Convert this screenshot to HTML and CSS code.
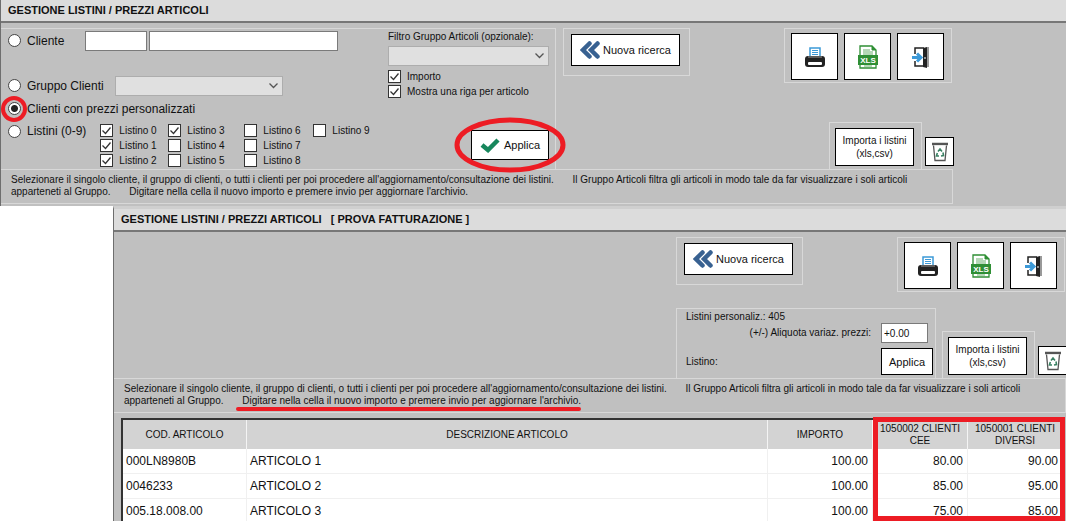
FILE: index.html
```
<!DOCTYPE html>
<html lang="it">
<head>
    <meta charset="UTF-8">
    <meta name="viewport" content="width=device-width, initial-scale=1.0">
    <title>Gestione listini / prezzi articoli</title>
    <link rel="stylesheet" href="styles.css">
</head>
<body>
    <!-- shared icons -->
    <svg class="sprite" aria-hidden="true">
        <symbol id="icon-back" viewBox="0 0 20 18">
            <path d="M9.500 2.500 3 9l6.500 6.500M17.500 2.500 11 9l6.500 6.500" fill="none" stroke="#386191" stroke-width="4.500" stroke-linecap="round"/>
        </symbol>
        <symbol id="icon-check" viewBox="0 0 20 16">
            <path d="M2 8 8 13 18 3" fill="none" stroke="#17875c" stroke-width="4.500"/>
        </symbol>
        <symbol id="icon-print" viewBox="0 0 22 22">
            <path d="M6 12V2h10v10" fill="#fff" stroke="#3d9ad8" stroke-width="1.500"/>
            <path d="M8 4.500h6M8 6.500h6M8 8.500h6" stroke="#3d9ad8"/>
            <rect x="1" y="10" width="20" height="11" rx="3" fill="#222"/>
            <path d="M4 11h14" stroke="#999"/>
            <rect x="4" y="16" width="14" height="3" rx="1" fill="#fff"/>
        </symbol>
        <symbol id="icon-xls" viewBox="0 0 22 24">
            <path d="M3 10V1h12l4 4v5M3 19v4h16v-4" fill="#fff" stroke="#2f8f35" stroke-width="1.300"/>
            <path d="M15 1v4h4" fill="#2f8f35" stroke="#2f8f35"/>
            <path d="M6 5h7M6 7h10M6 9h10M7 21h8" stroke="#6bb06f"/>
            <rect x="1" y="10" width="20" height="10" fill="#2f8f35"/>
        </symbol>
        <symbol id="icon-exit" viewBox="0 0 20 22">
            <path d="M4 8V2h9M4 15v5h9" fill="none" stroke="#222" stroke-width="1.500"/>
            <path d="M12 2l4-1v21l-4-1z" fill="#222"/>
            <path d="M17 1v20" stroke="#777" stroke-width="1.500"/>
            <path d="M13 12h2" stroke="#fff"/>
            <path d="M1 11.500h7M6 7.500l4 4-4 4" fill="none" stroke="#3d9ad8" stroke-width="3"/>
        </symbol>
        <symbol id="icon-trash" viewBox="0 0 18 20">
            <path d="M1 2h16" stroke="#555" stroke-width="2.500"/>
            <path d="M2.500 3.500 4 18.500h10l1.500-15" fill="#fff" stroke="#555" stroke-width="1.300"/>
            <path d="M7 9.500 9 7l2 2.500M12 10.500l.5 3-2.500.5M8 14H5.500l.8-3" fill="none" stroke="#3b8264" stroke-width="1.600"/>
        </symbol>
    </svg>

    <section class="window">
        <h1 class="title-bar">GESTIONE LISTINI / PREZZI ARTICOLI</h1>
        <div class="window-body">
            <div class="filters">
                <div class="filters-left">
                    <div class="row">
                        <label class="choice"><input type="radio" name="tipo"> Cliente</label>
                        <input type="text" class="field code" aria-label="Codice cliente">
                        <input type="text" class="field name" aria-label="Nome cliente">
                    </div>
                    <div class="row row-group">
                        <label class="choice"><input type="radio" name="tipo"> Gruppo Clienti</label>
                        <select class="select" aria-label="Gruppo clienti"><option></option></select>
                    </div>
                    <div class="row">
                        <label class="choice"><input type="radio" name="tipo" checked> Clienti con prezzi personalizzati
                            <svg class="mark-radio" viewBox="0 0 28 28"><circle cx="14" cy="14" r="11"/></svg>
                        </label>
                    </div>
                    <div class="row row-lists">
                        <label class="choice"><input type="radio" name="tipo"> Listini (0-9)</label>
                        <div class="lists">
                            <label class="tick"><input type="checkbox" checked> Listino 0</label>
                            <label class="tick"><input type="checkbox" checked> Listino 1</label>
                            <label class="tick"><input type="checkbox" checked> Listino 2</label>
                            <label class="tick"><input type="checkbox" checked> Listino 3</label>
                            <label class="tick"><input type="checkbox"> Listino 4</label>
                            <label class="tick"><input type="checkbox"> Listino 5</label>
                            <label class="tick"><input type="checkbox"> Listino 6</label>
                            <label class="tick"><input type="checkbox"> Listino 7</label>
                            <label class="tick"><input type="checkbox"> Listino 8</label>
                            <label class="tick"><input type="checkbox"> Listino 9</label>
                        </div>
                    </div>
                </div>
                <div class="filters-right">
                    <label for="filtro">Filtro Gruppo Articoli (opzionale):</label>
                    <select id="filtro" class="select"><option></option></select>
                    <label class="tick"><input type="checkbox" checked> Importo</label>
                    <label class="tick"><input type="checkbox" checked> Mostra una riga per articolo</label>
                    <div class="apply">
                        <button class="btn btn-apply"><svg width="20" height="16"><use href="#icon-check"/></svg>Applica</button>
                        <svg class="mark-apply" viewBox="0 0 112 56"><ellipse cx="56" cy="28" rx="53" ry="25"/></svg>
                    </div>
                </div>
            </div>
            <div class="tools">
                <div class="tools-top">
                    <div class="box search-box">
                        <button class="btn btn-search"><svg width="20" height="18"><use href="#icon-back"/></svg>Nuova ricerca</button>
                    </div>
                    <div class="box icon-box">
                        <button class="btn btn-icon" aria-label="Stampa"><svg width="22" height="22"><use href="#icon-print"/></svg></button>
                        <button class="btn btn-icon" aria-label="Esporta XLS"><svg width="22" height="24"><use href="#icon-xls"/><text x="11" y="18" class="xls-label">XLS</text></svg></button>
                        <button class="btn btn-icon" aria-label="Esci"><svg width="20" height="22"><use href="#icon-exit"/></svg></button>
                    </div>
                </div>
                <div class="tools-bottom">
                    <div class="box import-box"><button class="btn btn-import">Importa i listini<br>(xls,csv)</button></div>
                    <button class="btn btn-trash" aria-label="Elimina"><svg width="18" height="20"><use href="#icon-trash"/></svg></button>
                </div>
            </div>
        </div>
        <p class="note">Selezionare il singolo cliente, il gruppo di clienti, o tutti i clienti per poi procedere all'aggiornamento/consultazione dei listini. <span class="indent">Il Gruppo Articoli filtra gli articoli in modo tale da far visualizzare i soli articoli</span><br>apparteneti al Gruppo. <span class="indent">Digitare nella cella il nuovo importo e premere invio per aggiornare l'archivio.</span></p>
    </section>

    <section class="window window-result">
        <h2 class="title-bar">GESTIONE LISTINI / PREZZI ARTICOLI <span class="company">[ PROVA FATTURAZIONE ]</span></h2>
        <div class="window-body">
            <div class="empty"></div>
            <div class="tools">
                <div class="tools-top">
                    <div class="box search-box">
                        <button class="btn btn-search"><svg width="20" height="18"><use href="#icon-back"/></svg>Nuova ricerca</button>
                    </div>
                    <div class="box icon-box">
                        <button class="btn btn-icon" aria-label="Stampa"><svg width="22" height="22"><use href="#icon-print"/></svg></button>
                        <button class="btn btn-icon" aria-label="Esporta XLS"><svg width="22" height="24"><use href="#icon-xls"/><text x="11" y="18" class="xls-label">XLS</text></svg></button>
                        <button class="btn btn-icon" aria-label="Esci"><svg width="20" height="22"><use href="#icon-exit"/></svg></button>
                    </div>
                </div>
                <div class="tools-bottom">
                    <div class="box price-box">
                        <div>Listini personaliz.: 405</div>
                        <div class="price-row">
                            <label for="aliquota">(+/-) Aliquota variaz. prezzi:</label>
                            <input type="text" id="aliquota" class="field rate" value="+0.00">
                        </div>
                        <div class="price-row price-list">
                            <span>Listino:</span>
                            <button class="btn btn-small">Applica</button>
                        </div>
                    </div>
                    <div class="box import-box"><button class="btn btn-import">Importa i listini<br>(xls,csv)</button></div>
                    <button class="btn btn-trash" aria-label="Elimina"><svg width="18" height="20"><use href="#icon-trash"/></svg></button>
                </div>
            </div>
        </div>
        <p class="note">Selezionare il singolo cliente, il gruppo di clienti, o tutti i clienti per poi procedere all'aggiornamento/consultazione dei listini. <span class="indent">Il Gruppo Articoli filtra gli articoli in modo tale da far visualizzare i soli articoli</span><br>apparteneti al Gruppo. <span class="indent underlined">Digitare nella cella il nuovo importo e premere invio per aggiornare l'archivio.</span></p>
        <div class="table-wrap">
            <table class="prices">
                <colgroup>
                    <col class="col-code"><col><col class="col-price"><col class="col-client"><col class="col-client">
                </colgroup>
                <thead>
                    <tr><th>COD. ARTICOLO</th><th>DESCRIZIONE ARTICOLO</th><th>IMPORTO</th><th>1050002 CLIENTI CEE</th><th>1050001 CLIENTI DIVERSI</th></tr>
                </thead>
                <tbody>
                    <tr><td>000LN8980B</td><td>ARTICOLO 1</td><td class="num">100.00</td><td class="num">80.00</td><td class="num">90.00</td></tr>
                    <tr><td>0046233</td><td>ARTICOLO 2</td><td class="num">100.00</td><td class="num">85.00</td><td class="num">95.00</td></tr>
                    <tr><td>005.18.008.00</td><td>ARTICOLO 3</td><td class="num">100.00</td><td class="num">75.00</td><td class="num">85.00</td></tr>
                </tbody>
            </table>
            <div class="mark-columns"></div>
        </div>
    </section>
</body>
</html>
```
FILE: styles.css
```
* {
    box-sizing: border-box;
}
body {
    margin: 0;
    background-color: #fff;
    color: #111;
    font-family: "Liberation Sans", Arial, sans-serif;
    font-size: 10px;
    line-height: 12px;
    overflow: hidden;
}
input, select, button {
    font: inherit;
    color: inherit;
    margin: 0;
}
.sprite {
    position: absolute;
    width: 0;
    height: 0;
}
.xls-label {
    font-size: 8px;
    font-weight: bold;
    fill: #fff;
    text-anchor: middle;
}
.window {
    background-color: #c0c0c0;
    border-left: 1px solid #6e6e6e;
    padding-bottom: 2px;
}
.window-result {
    margin-left: 113px;
    border-top: 3px solid #cfcfcf;
    padding-bottom: 0;
}
.title-bar {
    margin: 0;
    padding: 0 7px;
    height: 23px;
    line-height: 21px;
    font-size: 11px;
    font-weight: bold;
    background-color: #dcdcdc;
    border-bottom: 2px solid #777;
}
.company {
    margin-left: 6px;
}
.window-body {
    display: grid;
    grid-template-columns: 1fr 391px;
    column-gap: 7px;
    width: 953px;
    padding-top: 5px;
}
.box {
    border: 1px solid #d8d8d8;
}

/* filters */
.filters {
    display: flex;
    justify-content: space-between;
    height: 141px;
    padding-right: 6px;
    border-top: 1px solid #d8d8d8;
    border-right: 1px solid #d8d8d8;
}
.filters-left {
    padding-left: 7px;
}
.row {
    display: flex;
    align-items: center;
    height: 23px;
}
.row-group {
    margin-top: 22px;
}
.row-lists {
    align-items: flex-start;
    padding-top: 3px;
}
.choice {
    position: relative;
    display: flex;
    align-items: center;
    gap: 6px;
    font-size: 12px;
    line-height: 16px;
}
.choice input {
    appearance: none;
    width: 13px;
    height: 13px;
    border: 1px solid #444;
    border-radius: 50%;
    background-color: #fff;
}
.choice input:checked {
    background: radial-gradient(circle, #222 3px, #fff 4px);
}
.field {
    height: 20px;
    padding: 0 2px;
    border: 1px solid #7a7a7a;
    background-color: #fff;
}
.code {
    width: 62px;
    margin-left: 21px;
}
.name {
    width: 189px;
    margin-left: 2px;
}
.select {
    appearance: none;
    width: 168px;
    height: 20px;
    border: 1px solid #adadad;
    border-radius: 0;
    background: #e0e0e0 url("data:image/svg+xml,%3Csvg xmlns='http://www.w3.org/2000/svg' width='9' height='6'%3E%3Cpath d='M.5.5l4 4 4-4' fill='none' stroke='%23555' stroke-width='1.3'/%3E%3C/svg%3E") no-repeat right 4px center;
}
.row-group .select {
    margin-left: 11px;
}
.tick {
    display: flex;
    align-items: center;
    gap: 6px;
    height: 15px;
}
.tick input {
    appearance: none;
    width: 13px;
    height: 13px;
    border: 1px solid #333;
    background-color: #fff;
}
.tick input:checked {
    background-image: url("data:image/svg+xml,%3Csvg xmlns='http://www.w3.org/2000/svg' width='11' height='11'%3E%3Cpath d='M1.5 5.5l3 3 5-6' fill='none' stroke='%23333' stroke-width='1.3'/%3E%3C/svg%3E");
}
.lists {
    display: grid;
    grid-template-columns: 68px 76px 69px;
    grid-template-rows: repeat(3, 15px);
    grid-auto-flow: column;
    margin-left: 14px;
}
.filters-right {
    display: flex;
    flex-direction: column;
    width: 161px;
    padding-top: 2px;
}
.filters-right .select {
    width: 161px;
    margin: 3px 0;
}
.apply {
    position: relative;
    align-self: flex-end;
    margin-top: 31px;
}

/* buttons */
.btn {
    display: flex;
    align-items: center;
    justify-content: center;
    padding: 0;
    border: 1px solid #000;
    border-radius: 0;
    background-color: #fff;
    font-size: 11px;
}
.btn-apply {
    gap: 4px;
    width: 78px;
    height: 30px;
}
.btn-search {
    gap: 3px;
    width: 109px;
    height: 32px;
}
.btn-icon {
    width: 47px;
    height: 47px;
}
.btn-import {
    width: 79px;
    height: 38px;
    font-size: 10px;
    line-height: 13px;
}
.btn-trash {
    width: 29px;
    height: 29px;
    margin: 0 0 3px 3px;
}
.btn-small {
    width: 52px;
    height: 27px;
}

/* toolbar */
.tools {
    display: flex;
    flex-direction: column;
    justify-content: space-between;
    height: 141px;
}
.tools-top {
    display: flex;
    align-items: flex-start;
    justify-content: space-between;
    padding-right: 2px;
}
.tools-bottom {
    display: flex;
    align-items: flex-end;
    justify-content: flex-end;
}
.search-box {
    width: 127px;
    height: 48px;
    padding: 5px 7px;
}
.icon-box {
    display: flex;
    gap: 6px;
    padding: 4px 7px 2px 6px;
}
.import-box {
    padding: 5px 7px 3px 5px;
    border-bottom: 0;
}
.price-box {
    width: 260px;
    height: 70px;
    margin-right: 6px;
    padding: 2px 2px 1px 9px;
    border-bottom: 0;
}
.price-row {
    display: flex;
    align-items: center;
    justify-content: flex-end;
    gap: 10px;
}
.price-list {
    justify-content: space-between;
    margin-top: 5px;
}
.rate {
    width: 47px;
    margin-right: 5px;
}

.note {
    width: 952px;
    min-height: 35px;
    margin: 0;
    padding: 4px 10px;
    border: 1px solid #d8d8d8;
    border-left: 0;
    white-space: nowrap;
}
.indent {
    position: relative;
    margin-left: 16px;
}
.underlined::after {
    content: "";
    position: absolute;
    left: -6px;
    right: 0;
    bottom: -5px;
    height: 4px;
    border-radius: 2px;
    background-color: #ed1c24;
}

/* price table */
.table-wrap {
    position: relative;
    margin: 5px 3px 0 7px;
}
.prices {
    width: 100%;
    table-layout: fixed;
    border-collapse: separate;
    border-spacing: 0;
    border-top: 2px solid #333;
    border-left: 2px solid #333;
    background-color: #fff;
}
.col-code {
    width: 124px;
}
.col-price {
    width: 105px;
}
.col-client {
    width: 95px;
}
.prices th {
    height: 29px;
    padding: 0 4px;
    border-right: 1px solid #f4f4f4;
    background-color: #d3d3d3;
    font-weight: normal;
}
.prices td {
    height: 25px;
    padding: 0 4px 0 3px;
    border-right: 1px solid #f0f0f0;
    border-bottom: 1px solid #f0f0f0;
    font-size: 12px;
}
.prices .num {
    text-align: right;
}

/* red highlights */
.mark-radio, .mark-apply {
    position: absolute;
    fill: none;
    stroke: #ed1c24;
    pointer-events: none;
}
.mark-radio {
    left: -8px;
    top: -6px;
    width: 28px;
    height: 28px;
    stroke-width: 4px;
}
.mark-apply {
    left: -17px;
    top: -13px;
    width: 112px;
    height: 56px;
    stroke-width: 5px;
}
.mark-columns {
    position: absolute;
    top: -1px;
    right: -2px;
    bottom: 3px;
    width: 192px;
    border: 5px solid #ed1c24;
}
```
